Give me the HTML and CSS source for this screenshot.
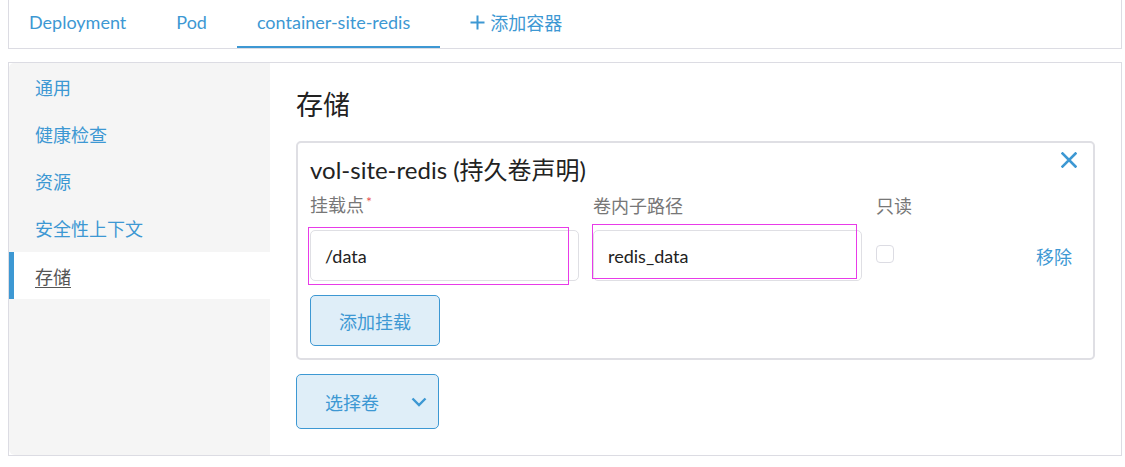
FILE: index.html
```html
<!DOCTYPE html>
<html lang="zh">
<head>
<meta charset="utf-8">
<link rel="stylesheet" href="styles.css">
</head>
<body>
<div class="tabs">
  <a class="tab">Deployment</a>
  <a class="tab">Pod</a>
  <a class="tab active">container-site-redis</a>
  <a class="tab add"><svg class="plus" width="15" height="15" viewBox="0 0 15 15"><path d="M7.5 0.5 V14.5 M0.5 7.5 H14.5" stroke="#3d98d3" stroke-width="2" fill="none"/></svg>添加容器</a>
</div>
<div class="panel">
  <nav class="side">
    <a class="side-item">通用</a>
    <a class="side-item">健康检查</a>
    <a class="side-item">资源</a>
    <a class="side-item">安全性上下文</a>
    <a class="side-item active"><span>存储</span></a>
  </nav>
  <main class="main">
    <h2 class="heading">存储</h2>
    <section class="card">
      <h3 class="card-title">vol-site-redis (持久卷声明)</h3>
      <button class="close" aria-label="close">
        <svg width="16" height="16" viewBox="0 0 16 16"><path d="M1.5 1.5 L14.5 14.5 M14.5 1.5 L1.5 14.5" stroke="#3d98d3" stroke-width="2.6" stroke-linecap="square" fill="none"/></svg>
      </button>
      <div class="grid">
        <label class="lbl">挂载点<span class="req">*</span></label>
        <label class="lbl">卷内子路径</label>
        <label class="lbl">只读</label>
        <span></span>
        <div class="field"><input class="input" value="/data"><span class="mark mark1"></span></div>
        <div class="field"><input class="input" value="redis_data"><span class="mark mark2"></span></div>
        <div class="chk-cell"><span class="chk"></span></div>
        <a class="remove">移除</a>
      </div>
      <button class="btn add-mount">添加挂载</button>
    </section>
    <button class="btn select">
      <span>选择卷</span>
      <svg width="16" height="10" viewBox="0 0 16 10"><path d="M1.5 1.5 L8 8 L14.5 1.5" stroke="#3d98d3" stroke-width="2.4" fill="none"/></svg>
    </button>
  </main>
</div>
</body>
</html>
```

FILE: styles.css
```css
* { box-sizing: border-box; }
html, body { margin: 0; padding: 0; background: #fff; }
body {
  padding: 0 3px 0 8px;
  font-family: Lato, "Noto Sans CJK SC", sans-serif;
  color: #222;
}
a { cursor: pointer; }

.tabs {
  display: flex;
  height: 49px;
  border: 1px solid #dcdce3;
  border-top: none;
  background: #fff;
}
.tab {
  display: flex;
  align-items: center;
  height: 48px;
  padding: 0 20px 2px;
  margin-right: 10px;
  font-size: 18px;
  color: #3d98d3;
  border-bottom: 2px solid transparent;
}
.tab.active { border-bottom-color: #3d98d3; padding-right: 30px; }
.plus { display: block; margin-right: 5px; }

.panel {
  display: flex;
  margin-top: 13px;
  height: 394px;
  border: 1px solid #dcdce3;
  background: #fff;
}
.side {
  width: 261px;
  background: #f5f5f5;
  padding-top: 0;
  border-top-left-radius: 5px;
  border-bottom-left-radius: 6px;
  display: flex;
  flex-direction: column;
}
.side-item {
  height: 47px;
  display: flex;
  align-items: center;
  padding-left: 26px;
  font-size: 18px;
  color: #3d98d3;
}
.side-item:nth-child(4) { height: 48px; }
.side-item.active {
  background: #fff;
  border-left: 5px solid #3d98d3;
  padding-left: 21px;
  color: #555;
}
.side-item.active span { text-decoration: underline; text-underline-offset: 3px; }

.main {
  flex: 1;
  padding: 27px 26px 26px 26px;
}
.heading {
  margin: 0 0 21px;
  font-size: 27px;
  line-height: 30px;
  font-weight: 400;
  color: #222;
}
.card {
  position: relative;
  border: 2px solid #dfdfe4;
  border-radius: 5px;
  padding: 13px 12px 12px;
}
.card-title {
  margin: 0;
  font-size: 24px;
  line-height: 28px;
  font-weight: 400;
  color: #222;
}
.close {
  position: absolute;
  top: 9px;
  right: 16px;
  border: 0;
  background: none;
  padding: 0;
  width: 16px;
  height: 16px;
}
.close svg { display: block; }
.grid {
  display: grid;
  grid-template-columns: 269px 269px 1fr auto;
  column-gap: 14px;
  row-gap: 11px;
  margin-top: 9px;
  align-items: center;
}
.lbl {
  font-size: 18px;
  line-height: 24px;
  color: #777;
}
.req { color: #e85555; font-size: 14px; margin-left: 2px; position: relative; top: -5px; }
.field { position: relative; }
.input {
  display: block;
  width: 100%;
  height: 51px;
  border: 1px solid #dfdfe4;
  border-radius: 5px;
  padding: 0 14px;
  font-family: Lato, "Noto Sans CJK SC", sans-serif;
  font-size: 18px;
  color: #222;
  background: #fff;
  outline: none;
}
.mark {
  position: absolute;
  border: 1px solid #e83be8;
  pointer-events: none;
}
.mark1 { left: -2px; top: -3px; width: 261px; height: 58px; }
.mark2 { left: -1px; top: -6px; width: 265px; height: 55px; }
.chk-cell { display: flex; align-items: center; }
.chk {
  width: 18px;
  height: 18px;
  border: 1px solid #dcdce3;
  border-radius: 4px;
  background: #fff;
  position: relative;
  top: -2px;
}
.remove {
  font-size: 18px;
  color: #3d98d3;
  padding-right: 9px;
}
.btn {
  font-family: Lato, "Noto Sans CJK SC", sans-serif;
  font-size: 18px;
  color: #3d98d3;
  background: #dfeef8;
  border: 1px solid #3d98d3;
  border-radius: 5px;
  padding: 0;
}
.add-mount {
  display: block;
  margin-top: 14px;
  width: 130px;
  height: 51px;
}
.select {
  margin-top: 14px;
  width: 143px;
  height: 55px;
  display: flex;
  align-items: center;
  padding: 0 11px 0 28px;
  justify-content: space-between;
}
.select svg { display: block; }
```
